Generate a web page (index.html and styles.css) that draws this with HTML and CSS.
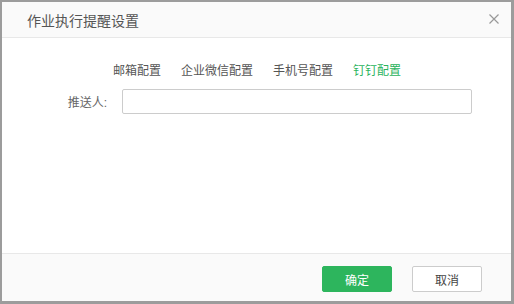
FILE: index.html
```html
<!DOCTYPE html>
<html lang="zh-CN">
<head>
  <meta charset="UTF-8">
  <title>作业执行提醒设置</title>
  <link rel="stylesheet" href="styles.css">
</head>
<body>
  <div class="dialog">
    <div class="dialog-header">
      <span class="dialog-title">作业执行提醒设置</span>
      <span class="dialog-close">
        <svg width="10" height="10" viewBox="0 0 10 10"><path d="M0.5 0.5L9.5 9.5M9.5 0.5L0.5 9.5" stroke="#999" stroke-width="1.2" fill="none"/></svg>
      </span>
    </div>
    <div class="dialog-body">
      <div class="tabs">
        <span class="tab">邮箱配置</span>
        <span class="tab">企业微信配置</span>
        <span class="tab">手机号配置</span>
        <span class="tab active">钉钉配置</span>
      </div>
      <div class="field">
        <label class="field-label">推送人:</label>
        <input class="field-input" type="text">
      </div>
    </div>
    <div class="dialog-footer">
      <button class="btn btn-primary">确定</button>
      <button class="btn">取消</button>
    </div>
  </div>
</body>
</html>
```

FILE: styles.css
```css
body {
  margin: 0;
  background: #9c9c9c;
  font-family: "Liberation Sans", "Noto Sans CJK SC", sans-serif;
  overflow: hidden;
}
.dialog {
  width: 509px;
  height: 299px;
  margin: 2px 0 0 2px;
  background: #fff;
  display: flex;
  flex-direction: column;
}
.dialog-header {
  height: 35px;
  background: #fafafa;
  border-bottom: 1px solid #e8e8e8;
  display: flex;
  align-items: center;
  justify-content: space-between;
  padding: 0 12px 0 25px;
}
.dialog-title {
  font-size: 14px;
  color: #555;
}
.dialog-close {
  display: flex;
  width: 10px;
  height: 10px;
  margin-top: -2px;
}
.dialog-body {
  flex: 1;
}
.tabs {
  display: flex;
  justify-content: center;
  margin-top: 23px;
  margin-left: 1px;
}
.tab {
  font-size: 12px;
  line-height: 20px;
  color: #555;
  padding: 0 10px;
}
.tab.active {
  color: #2ab35c;
}
.field {
  display: flex;
  align-items: center;
  margin-top: 8px;
}
.field-label {
  width: 105px;
  text-align: right;
  margin-right: 15px;
  font-size: 12px;
  color: #666;
}
.field-input {
  width: 350px;
  height: 25px;
  box-sizing: border-box;
  border: 1px solid #ccc;
  border-radius: 2px;
  margin: 0;
}
.dialog-footer {
  height: 48px;
  background: #fafafa;
  border-top: 1px solid #e8e8e8;
  display: flex;
  justify-content: flex-end;
  align-items: flex-start;
  gap: 20px;
  padding: 12px 29px 0 0;
  box-sizing: border-box;
}
.btn {
  width: 70px;
  height: 26px;
  border: 1px solid #ccc;
  border-radius: 2px;
  background: #fff;
  color: #444;
  font-size: 12px;
  font-family: inherit;
  padding: 0;
}
.btn-primary {
  background: #2db55d;
  border-color: #2db55d;
  color: #fff;
}
```
